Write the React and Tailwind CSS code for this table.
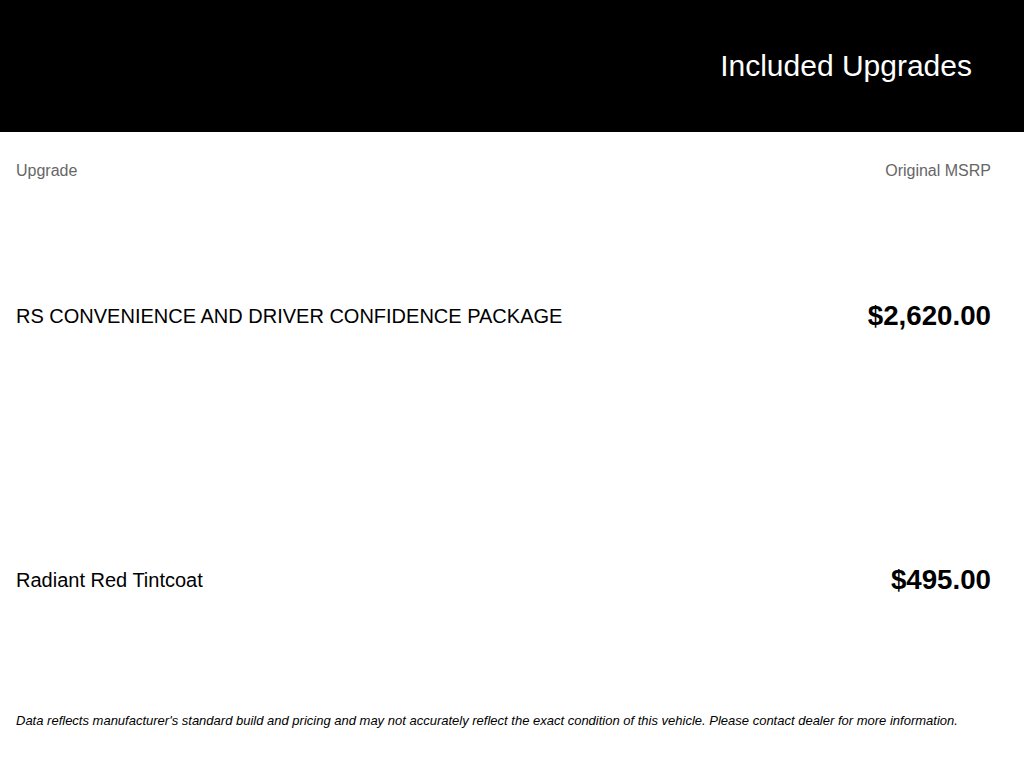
import React from "react";

const upgrades = [
  { name: "RS CONVENIENCE AND DRIVER CONFIDENCE PACKAGE", price: "$2,620.00" },
  { name: "Radiant Red Tintcoat", price: "$495.00" },
];

const App = () => {
  return (
    <div className="min-h-screen w-full bg-white font-['Liberation_Sans',Arial,sans-serif] text-black">
      {/* Header */}
      <div className="flex h-[132px] items-center justify-end bg-black pr-[52px]">
        <h1 className="text-[30px] leading-none text-white">Included Upgrades</h1>
      </div>

      {/* Column labels */}
      <div className="flex h-[52px] items-center justify-between pl-4 pr-[33px] pt-[25px]">
        <span className="text-[16px] leading-none text-[#666666]">Upgrade</span>
        <span className="text-[16px] leading-none text-[#666666]">Original MSRP</span>
      </div>

      {/* Rows */}
      {upgrades.map((u) => (
        <div
          key={u.name}
          className="flex h-[264px] items-center justify-between pl-4 pr-[33px]"
        >
          <span className="text-[20px] leading-none">{u.name}</span>
          <span className="text-[27.7px] font-bold leading-none">{u.price}</span>
        </div>
      ))}

      {/* Disclaimer */}
      <p className="pl-4 pt-[1px] text-[13px] italic leading-[16px] text-black">
        Data reflects manufacturer's standard build and pricing and may not accurately reflect the exact condition of this vehicle. Please contact dealer for more information.
      </p>
    </div>
  );
};

export default App;
